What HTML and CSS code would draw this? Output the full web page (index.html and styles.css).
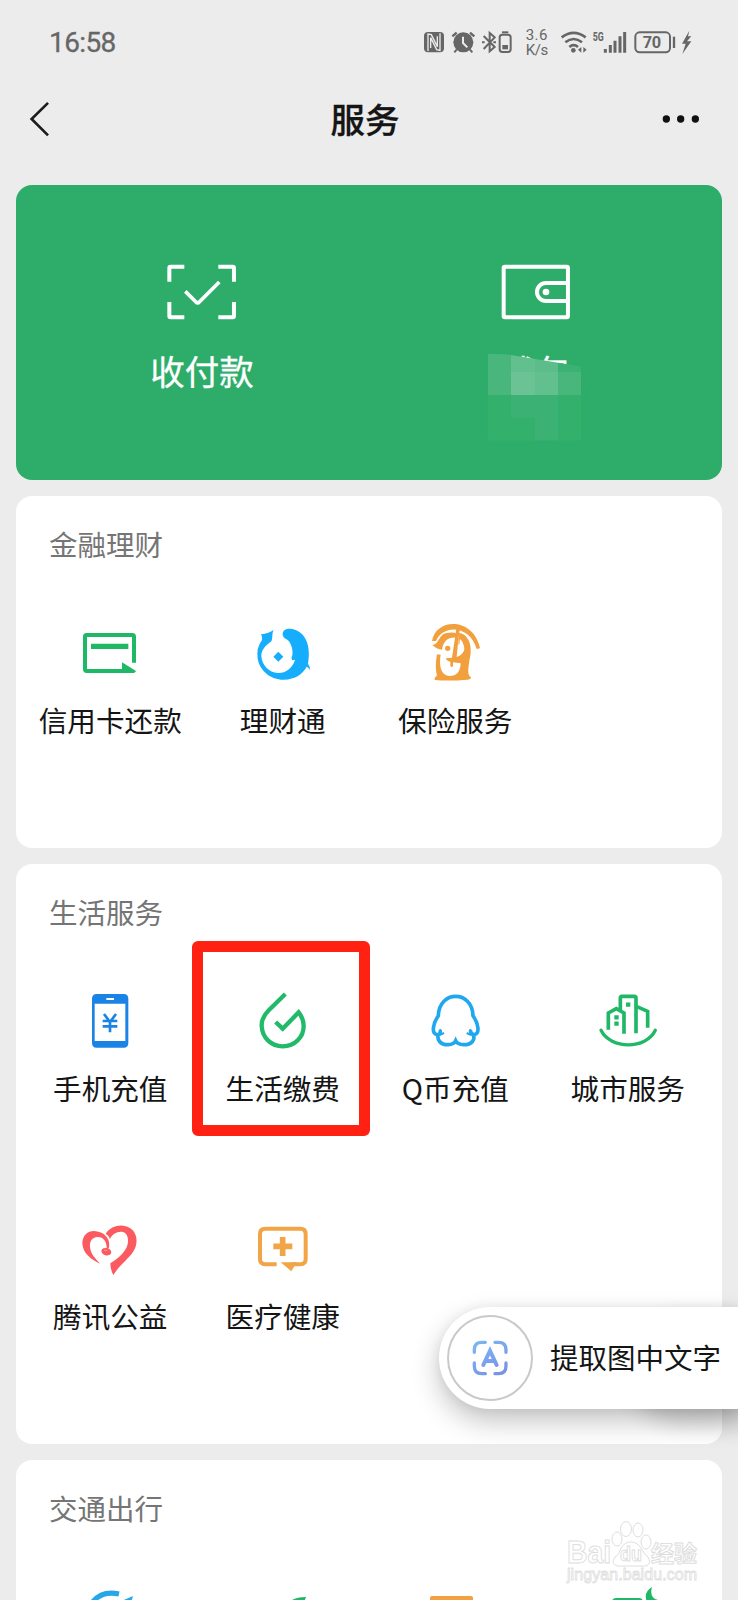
FILE: index.html
```html
<!DOCTYPE html>
<html lang="zh-CN">
<head>
<meta charset="utf-8">
<title>服务</title>
<link rel="stylesheet" href="styles.css">
</head>
<body>
<div class="screen">
  <header class="status">
    <span class="time">16:58</span>
    <svg class="status-icons" viewBox="66 80 816 90" fill="none" stroke="#666" stroke-width="6">
      <rect x="72" y="95" width="60" height="61" rx="12" fill="#666" stroke="none"/>
      <path d="M84 152V101L94 103L112 139V108M120 99V150L110 148L92 112V143" stroke="#ececec" stroke-width="4"/>
      <circle cx="190" cy="126" r="30" fill="#666" stroke="none"/>
      <path d="M189 109V128L202 141" stroke="#ececec"/>
      <path d="M157 108L170 97M210 97L223 108" stroke-width="7"/>
      <path d="M170 148L163 156M210 148L217 156"/>
      <path d="M251 107L284 140L269 153V98L284 111L251 146" stroke-width="6"/>
      <path d="M246 126h8M280 126h8" stroke-width="6"/>
      <rect x="299" y="103" width="33" height="52" rx="8" stroke-width="6"/>
      <path d="M306 96h19" stroke-width="6"/>
      <rect x="307" y="134" width="17" height="13" fill="#666" stroke="none"/>
      <g class="svg-text">
        <text x="377" y="120" font-size="45" textLength="65">3.6</text>
        <text x="377" y="163" font-size="45" textLength="68">K/s</text>
        <text class="b" x="578" y="121" font-size="40" textLength="33" lengthAdjust="spacingAndGlyphs">5G</text>
        <text class="b" x="728" y="144" font-size="49" textLength="55">70</text>
      </g>
      <path d="M485 111Q521 84 557 111M496 126Q521 106 546 126M508 140Q521 129 534 140" stroke-width="8"/>
      <circle cx="520" cy="150" r="7" fill="#666" stroke="none"/>
      <path d="M544 140V157L534 148.500ZM550 140V157L560 148.500Z" fill="#666" stroke="none"/>
      <path d="M616 146V157M631 134V157M645 121V157M660 108V157M674 95V157" stroke-width="9"/>
      <rect x="706" y="96" width="104" height="60" rx="13" stroke-width="6"/>
      <path d="M822 109V143" stroke-width="7"/>
      <path d="M868 91L846 130H857L847 161L874 123H861L874 108H864Z" fill="#666" stroke="none"/>
    </svg>
  </header>
  <nav class="nav">
    <svg class="back" viewBox="84 297 70 120" fill="none" stroke="#1c1c1c" stroke-width="8"><path d="M145 308L95 357L145 407"/></svg>
    <h1>服务</h1>
    <svg class="more" viewBox="780 342 126 30" fill="#111"><circle cx="799" cy="357" r="11"/><circle cx="842" cy="357" r="11"/><circle cx="886" cy="357" r="11"/></svg>
  </nav>

  <main>
    <section class="hero">
      <div class="hero-item">
        <svg class="hero-icon" viewBox="107 64 220 180" fill="none" stroke="#fff" stroke-width="12">
          <path d="M165 78H124Q120 78 120 82V123M267 78H310Q314 78 314 82V123M120 184V226Q120 230 124 230H165M267 230H310Q314 230 314 226V184"/>
          <path d="M168 152L200 184Q205 190 210 184L270 124" stroke-width="11"/>
        </svg>
        <span>收付款</span>
      </div>
      <div class="hero-item">
        <svg class="hero-icon" viewBox="117 64 220 180" fill="none" stroke="#fff" stroke-width="12">
          <rect x="131" y="78" width="193" height="152" rx="4"/>
          <path d="M322 127H258A27 27 0 0 0 258 181H322"/>
          <circle cx="258" cy="154" r="10" fill="#fff" stroke="none"/>
        </svg>
        <span>钱包</span>
        <div class="mosaic"><i class="m3"></i><i class="m5"></i><i class="m4"></i><i class="m2"></i><i class="m3"></i><i class="m6"></i><i class="m5"></i><i class="m3"></i><i class="m1"></i><i class="m2"></i><i class="m2"></i><i class="m1"></i><i class="m1"></i><i class="m1"></i><i class="m2"></i><i class="m1"></i></div>
      </div>
    </section>

    <section class="card">
      <h2>金融理财</h2>
      <div class="grid">
        <div class="cell">
          <svg viewBox="150 69 180 180" fill="none" stroke="#1fb866" stroke-width="12">
            <path d="M312 188V110Q312 105 307 105H170Q165 105 165 110V208Q165 213 170 213H290"/>
            <path d="M183 139H295" stroke-width="16"/>
            <path d="M276 187L318 213Q316 219 310 219H276Z" fill="#1fb866" stroke="none"/>
          </svg>
          <span>信用卡还款</span>
        </div>
        <div class="cell">
          <svg viewBox="669 69 180 180" fill="#16aefc">
            <path d="M731 89Q717 100 693 103Q698 111 696 120Q678 144 683 176C690 213 723 240 762 239C796 238 818 222 830 200Q836 203 840 210Q840 199 834 191C839 164 838 130 821 108C804 87 777 82 764 90C754 98 757 112 768 117C782 123 790 148 787 166C784 172 784 177 787 181L795 179C788 204 766 220 744 219C716 218 696 195 694 169C693 148 710 133 723 125C730 116 724 103 731 89Z"/>
            <path d="M745 155L760 170L745 185L730 170Z"/>
          </svg>
          <span>理财通</span>
        </div>
        <div class="cell">
          <svg viewBox="135 69 180 180" fill="#f2a03e">
            <path d="M156 123C167 53 281 50 300 145L290 147C271 77 190 71 168 123Z"/>
            <path d="M157 135C179 133 175 98 207 98Q222 96 230 101L228 113C203 111 190 125 186 149Q172 149 157 135Z"/>
            <path d="M238 98C272 106 278 148 268 182C265 207 261 225 273 232Q273 239 261 239Q209 244 164 240Q163 233 171 226C165 206 168 181 171 163L182 164C177 195 181 225 207 228C233 229 241 211 242 190L219 187V198Q215 204 211 198V185Q199 184 198 175L216 173L229 86L240 80Q234 125 230 171Q250 164 250 151C250 140 239 135 235 133Z"/>
            <path d="M240 117Q237 140 233 166Q253 160 253 146Q251 127 240 117Z" fill="#fff"/>
            <circle cx="203" cy="145" r="8"/>
          </svg>
          <span>保险服务</span>
        </div>
      </div>
    </section>

    <section class="card life">
      <h2>生活服务</h2>
      <div class="grid">
        <div class="cell">
          <svg viewBox="152 182 180 180" fill="#1c83e6">
            <path fill-rule="evenodd" d="M202 191H283Q297 191 297 205V338Q297 352 283 352H202Q188 352 188 338V205Q188 191 202 191ZM196 220V332H288V220ZM231 203V209H254V203Z"/>
            <path d="M224 251L242 275L260 251M220 272H264M220 288H264M242 272V306" fill="none" stroke="#1c83e6" stroke-width="8"/>
          </svg>
          <span>手机充值</span>
        </div>
        <div class="cell picked">
          <svg viewBox="669 182 180 180" fill="none" stroke="#21b96a" stroke-width="13">
            <path d="M766 191L717 239C701 255 694 267 695 287C697 323 724 348 758 348C795 348 821 320 821 287C821 269 814 256 806 246L758 295L737 275"/>
          </svg>
          <span>生活缴费</span>
        </div>
        <div class="cell">
          <svg viewBox="135 62 180 180" fill="none" stroke="#20a8ee" stroke-width="11">
            <path d="M181 180Q181 194 171 193C154 190 158 161 175 136C177 59 277 59 279 136C296 161 300 190 283 193Q273 194 271 180M175 191C170 208 180 223 204 223Q222 222 227 211Q232 222 251 223C276 223 287 208 279 191"/>
            <path d="M181 176V193L192 188M271 176V193L260 188" stroke-width="6"/>
          </svg>
          <span>Q币充值</span>
        </div>
        <div class="cell">
          <svg viewBox="652 62 180 180" fill="none" stroke="#1fb866" stroke-width="11">
            <path d="M683 178V128L707 115L730 128V190M719 118V83Q719 78 724 78H761Q766 78 766 83V189M767 108L801 123V172"/>
            <path d="M661 180C690 238 796 238 824 180" stroke-width="10" stroke-linecap="round"/>
            <path d="M701 141H714M701 160H714M736 103H749" stroke-width="13"/>
          </svg>
          <span>城市服务</span>
        </div>
        <div class="cell">
          <svg viewBox="152 60 180 180" fill="#fb5b60">
            <path d="M212 194C185 181 160 163 159 132C160 103 183 90 207 98C229 103 244 122 239 146L232 149C233 128 222 113 204 114C189 115 180 127 182 145C184 166 199 179 212 194Z"/>
            <path d="M229 104C246 78 280 73 302 87C327 104 326 137 311 159C296 181 271 198 252 228Q243 211 243 193C268 178 296 153 296 127C297 110 289 99 277 98C262 97 248 106 242 120Q238 109 229 104Z"/>
            <ellipse cx="231" cy="158" rx="15" ry="11" transform="rotate(15 231 158)"/>
            <path d="M224 155q5 -5 10 1" fill="none" stroke="#ff9ca0" stroke-width="3"/>
          </svg>
          <span>腾讯公益</span>
        </div>
        <div class="cell">
          <svg viewBox="669 60 180 180" fill="none" stroke="#f2a546" stroke-width="12">
            <path d="M740 196H706Q690 196 690 180V105Q690 89 706 89H811Q827 89 827 105V180Q827 196 811 196H784"/>
            <path d="M730 142H787M758 114V171" stroke-width="17"/>
            <path d="M752 190H800L784 217Z" fill="#f2a546" stroke="none"/>
          </svg>
          <span>医疗健康</span>
        </div>
      </div>
    </section>

    <section class="card">
      <h2>交通出行</h2>
      <div class="grid">
        <div class="cell"><svg viewBox="80 1586 60 60" fill="none" stroke="#27a7e8" stroke-width="5"><path d="M91 1603Q101 1589 119 1593"/><path d="M133 1595L117 1602L128 1612Z" fill="#27a7e8" stroke="none"/></svg></div>
        <div class="cell"><svg viewBox="253 1586 60 60" fill="#1fb866"><path d="M306 1596Q293 1596 289 1602L284 1599L280 1601L292 1613Q303 1606 306 1596Z"/></svg></div>
        <div class="cell"><svg viewBox="425 1586 60 60" fill="#f2a043"><rect x="430" y="1595" width="43" height="45" rx="2"/></svg></div>
        <div class="cell"><svg viewBox="597 1586 60 60" fill="#1fb866"><rect x="611" y="1597" width="31" height="40" rx="4"/><path d="M651 1586Q641 1592 647 1603H657V1599Q648 1597 651 1586Z"/></svg></div>
      </div>
    </section>
  </main>

  <div class="extract">
    <div class="ring">
      <svg viewBox="152 176 115 115" fill="none" stroke-width="10" stroke-linecap="round">
        <defs><linearGradient id="ink" gradientUnits="userSpaceOnUse" x1="165" y1="180" x2="225" y2="285"><stop offset="0" stop-color="#7bb9ee"/><stop offset=".5" stop-color="#7ba5f0"/><stop offset="1" stop-color="#7994e6"/></linearGradient></defs>
        <g stroke="url(#ink)"><path d="M162 216V208Q162 186 184 186H195M224 186H235Q257 186 257 208V216M162 248V257Q162 280 184 280H195M224 280H235Q257 280 257 257V248"/><path d="M189 254L209 211L229 254M197 242H221" stroke-width="12"/></g>
      </svg>
    </div>
    <span>提取图中文字</span>
  </div>

  <div class="watermark">
    <svg viewBox="0 0 136 66" fill="#fff" stroke="#dedede" stroke-width="1">
      <text class="wm" x="1" y="43" font-size="32" textLength="44" lengthAdjust="spacingAndGlyphs">Bai</text>
      <path d="M65 22C54 22 55 34 49 37C44 44 50 47 57 46H75C82 47 86 43 82 37C76 33 75 22 65 22Z"/>
      <ellipse cx="51" cy="19" rx="5" ry="7"/><ellipse cx="60" cy="9" rx="5.500" ry="7.500"/><ellipse cx="72" cy="10" rx="5" ry="7"/><ellipse cx="80" cy="22" rx="5" ry="7"/>
      <text class="wm" x="54" y="41" font-size="20" textLength="22" lengthAdjust="spacingAndGlyphs">du</text>
      <text class="wm" x="85" y="42" font-size="23" textLength="46">经验</text>
      <text class="wm url" x="1" y="60" font-size="16" textLength="130">jingyan.baidu.com</text>
    </svg>
  </div>
</div>
</body>
</html>
```
FILE: styles.css
```css
*, *::after { box-sizing: border-box; }

body {
  margin: 0;
  background: #ececec;
  font-family: Roboto, "Noto Sans CJK SC", sans-serif;
  color: #151515;
}

.screen {
  position: relative;
  width: 738px;
  height: 1600px;
  overflow: hidden;
}

.screen svg { display: block; overflow: visible; }

.status {
  display: flex;
  justify-content: space-between;
  align-items: center;
  height: 84px;
  padding: 0 44px 0 49px;
}

.time {
  font-size: 28px;
  letter-spacing: -0.6px;
  color: #666;
  -webkit-text-stroke: 0.300px #666;
}

.status-icons { width: 272px; height: 30px; }

.svg-text text {
  fill: #666;
  stroke: none;
  font-family: Roboto, sans-serif;
}

.svg-text .b { font-weight: 700; }

.nav {
  display: grid;
  grid-template-columns: 60px 1fr 60px;
  align-items: center;
  height: 70px;
  padding: 0 36px 0 28px;
}

.back { width: 23px; height: 40px; }
.more { width: 42px; height: 10px; justify-self: end; }

.nav h1 {
  margin: -2px 0 0;
  text-align: center;
  font-family: "Noto Sans CJK SC", sans-serif;
  font-size: 34.500px;
  font-weight: 500;
  line-height: 50px;
  -webkit-text-stroke: 0.300px #151515;
}

main {
  display: flex;
  flex-direction: column;
  gap: 16.500px;
  padding: 30.500px 16px 0;
}

.hero {
  display: grid;
  grid-template-columns: 1fr 1fr;
  flex-shrink: 0;
  height: 295px;
  padding: 77px 19px 0;
  border-radius: 16px;
  background: #2dad69;
  color: #fff;
}

.hero-item {
  position: relative;
  display: flex;
  flex-direction: column;
  align-items: center;
}

.hero-icon { width: 73.300px; height: 60px; }

.hero-item span {
  margin-top: 23px;
  font-family: "Noto Sans CJK SC", sans-serif;
  font-size: 34.500px;
  line-height: 50px;
  -webkit-text-stroke: 0.300px #fff;
}

.mosaic {
  position: absolute;
  left: 119px;
  top: 92px;
  display: grid;
  grid-template-columns: repeat(4, 1fr);
  grid-template-rows: 18px 23px 23px 23px;
  width: 93px;
  height: 87px;
  clip-path: polygon(0 0, 20px 1px, 100% 13px, 100% 100%, 0 100%);
}

.m1 { background: #34b06d; }
.m2 { background: #3bb273; }
.m3 { background: #49b67c; }
.m4 { background: #5cbd8a; }
.m5 { background: #62c08f; }
.m6 { background: #6bc295; }

.card {
  height: 351.500px;
  flex-shrink: 0;
  padding: 28px 8px 0;
  border-radius: 16px;
  background: #fff;
}

.card.life { height: 579.500px; }

.card h2 {
  margin: 0 0 58.500px 25px;
  font-family: "Noto Sans CJK SC", sans-serif;
  font-size: 28.500px;
  font-weight: 400;
  line-height: 40px;
  color: #757575;
}

.grid {
  display: grid;
  grid-template-columns: repeat(4, 1fr);
  row-gap: 109px;
}

.cell {
  position: relative;
  display: flex;
  flex-direction: column;
  align-items: center;
  gap: 17.500px;
  height: 119px;
}

.cell svg { width: 60px; height: 60px; }

.cell span {
  font-family: "Noto Sans CJK SC", sans-serif;
  font-size: 28.600px;
  line-height: 40px;
  white-space: nowrap;
}

.picked::after {
  content: "";
  position: absolute;
  left: -4.500px;
  top: -50px;
  width: 178px;
  height: 195px;
  border: 11px solid #ff2111;
  border-radius: 6px;
}

.extract {
  position: absolute;
  right: 0;
  top: 1307px;
  display: flex;
  align-items: center;
  gap: 17px;
  width: 299px;
  height: 102px;
  padding-left: 8px;
  border-radius: 51px 0 0 51px;
  background: #fff;
  box-shadow: 0 12px 28px rgba(0, 0, 0, 0.24), 0 0 12px rgba(0, 0, 0, 0.06), 190px 14px 22px rgba(0, 0, 0, 0.16);
}

.extract span {
  margin-top: -2px;
  font-family: "Noto Sans CJK SC", sans-serif;
  font-size: 28.500px;
  line-height: 40px;
  white-space: nowrap;
}

.ring {
  display: grid;
  place-items: center;
  flex: none;
  width: 86px;
  height: 86px;
  border: 2px solid #c9c9c9;
  border-radius: 50%;
}

.ring svg { width: 38.300px; height: 38.300px; }

.watermark {
  position: absolute;
  left: 566px;
  top: 1520px;
  width: 136px;
}

.wm {
  font-family: "Liberation Sans", "Noto Sans CJK SC", sans-serif;
  font-weight: 700;
}

.url { font-weight: 400; stroke-width: 0.800px; }
```
